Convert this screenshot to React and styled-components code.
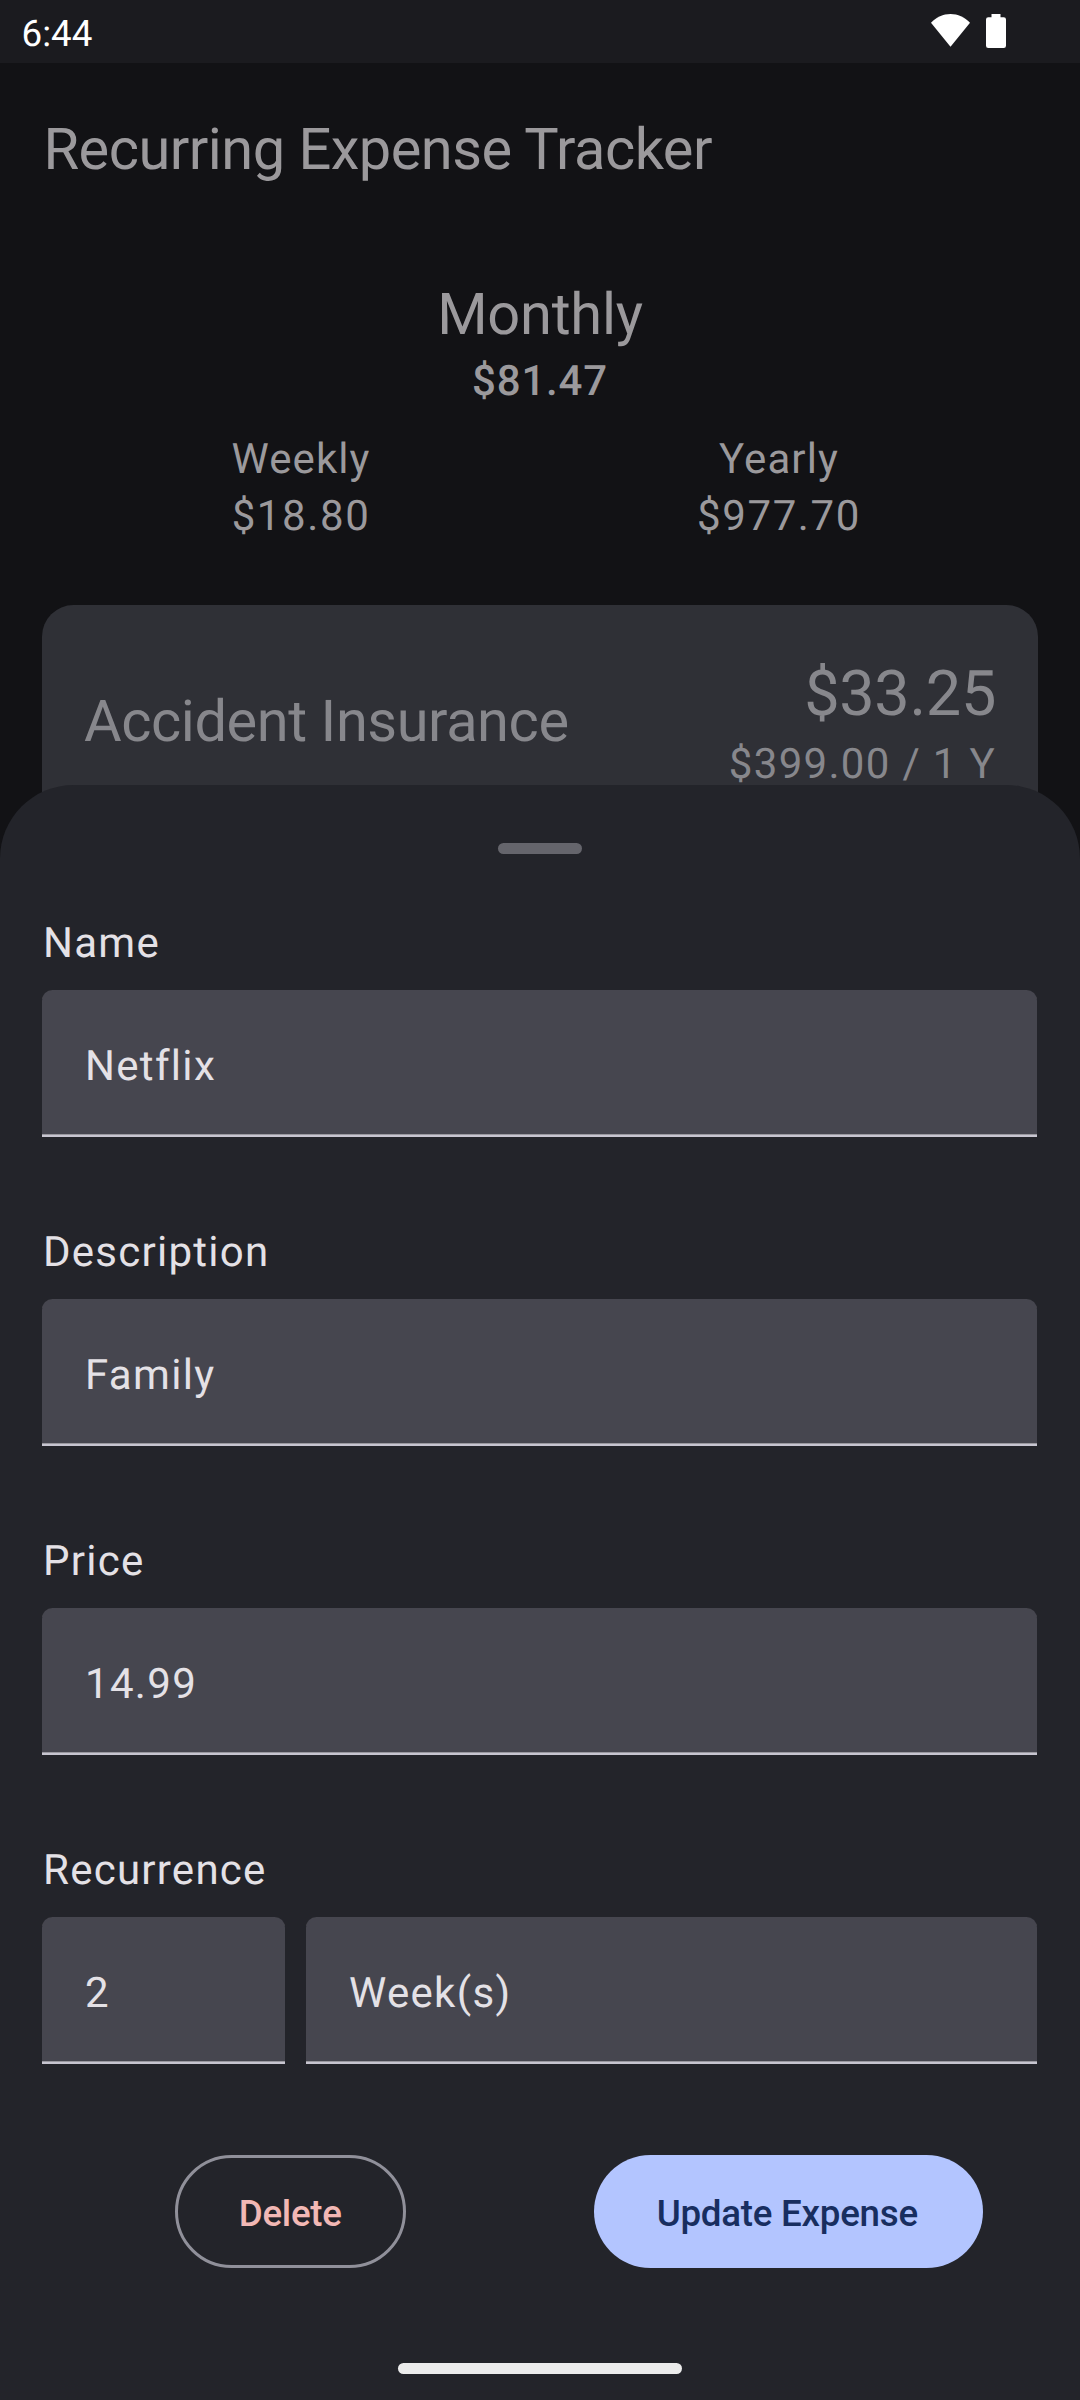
import React from "react";
import styled, { createGlobalStyle } from "styled-components";

const GlobalStyle = createGlobalStyle`
  *, *::before, *::after { box-sizing: border-box; }
  body {
    margin: 0;
    background: #121215;
    font-family: Roboto, "Noto Sans", sans-serif;
    text-rendering: geometricPrecision;
  }
`;

const Screen = styled.div`
  width: 1080px;
  height: 2400px;
  display: flex;
  flex-direction: column;
  overflow: hidden;
  background: #121215;
`;

const StatusBar = styled.header`
  flex: none;
  height: 63px;
  display: flex;
  align-items: flex-start;
  justify-content: space-between;
  padding: 0 74px 0 21.5px;
  background: #1b1b1f;
  color: #fff;
`;

const Clock = styled.span`
  font-size: 36.75px;
  line-height: 43px;
  padding-top: 12px;
`;

const StatusIcons = styled.div`
  display: flex;
  gap: 16px;
  padding-top: 14px;
`;

const Backdrop = styled.div`
  flex: none;
  height: 722px;
  display: flex;
  flex-direction: column;
  color: #9b999c;
`;

const AppTitle = styled.h1`
  margin: 0;
  padding: 51px 0 0 43.5px;
  font-size: 57.75px;
  font-weight: 400;
  line-height: 73px;
  letter-spacing: -0.52px;
`;

const Summary = styled.section`
  display: flex;
  flex-direction: column;
  align-items: center;
  padding-top: 92px;
`;

const SummaryTitle = styled.h2`
  margin: 0 0 1px;
  font-size: 57.75px;
  font-weight: 400;
  line-height: 73px;
  letter-spacing: -0.25px;
`;

const Amount = styled.div`
  font-size: 42px;
  font-weight: ${(p) => (p.$strong ? 500 : 400)};
  line-height: 57px;
  letter-spacing: ${(p) => p.$tracking || "1.3125px"};
`;

const SummaryRow = styled.div`
  width: 100%;
  display: grid;
  grid-template-columns: 1fr 1fr;
  margin-top: 21px;
  padding: 0 62px;
  text-align: center;
`;

const ExpenseCard = styled.article`
  flex: none;
  display: flex;
  justify-content: space-between;
  align-items: center;
  height: 235px;
  margin: 60px 42px 0;
  padding: 0 42px;
  border-radius: 31.5px;
  background: #2f3036;
  color: #87878c;
`;

const ExpenseName = styled.div`
  font-size: 57.75px;
  line-height: 73px;
  letter-spacing: -0.43px;
`;

const ExpensePrices = styled.div`
  display: flex;
  flex-direction: column;
  align-items: flex-end;
`;

const MonthlyPrice = styled.div`
  font-size: 63px;
  line-height: 83px;
  letter-spacing: -0.3px;
`;

const Sheet = styled.main`
  flex: 1;
  display: flex;
  flex-direction: column;
  padding: 0 42px;
  border-radius: 73.5px 73.5px 0 0;
  background: #23242a;
  color: #e4e1e6;
  z-index: 1;
`;

const DragHandle = styled.div`
  flex: none;
  align-self: center;
  width: 84px;
  height: 11px;
  margin-top: 58px;
  border-radius: 6px;
  background: #65656c;
`;

const Form = styled.form`
  display: flex;
  flex-direction: column;
  gap: 83px;
  padding: 57px 1px 0 0;
`;

const Field = styled.div`
  display: flex;
  flex-direction: column;
  gap: 16px;
`;

const Label = styled.label`
  height: 63px;
  padding-left: 1px;
  font-size: 42px;
  line-height: 65px;
  letter-spacing: 1.25px;
`;

const InputRow = styled.div`
  display: grid;
  grid-template-columns: ${(p) => p.$columns || "1fr"};
  gap: 21px;
`;

const TextInput = styled.div`
  height: 147px;
  padding: 0 43px;
  border-bottom: 2px solid #c7c5d0;
  box-shadow: inset 0 -1px 0 #99989f;
  border-radius: 10.5px 10.5px 0 0;
  background: #46464f;
  font-size: 42px;
  line-height: 153px;
  letter-spacing: 1.3125px;
`;

const Actions = styled.div`
  display: grid;
  grid-template-columns: 1fr 1fr;
  justify-items: center;
  margin-top: 91px;
  padding-right: 1px;
`;

const Button = styled.button`
  height: 113px;
  width: ${(p) => (p.$filled ? "389px" : "231px")};
  padding: ${(p) => (p.$filled ? "4px 2px 0 0" : "4px 1px 0 0")};
  border: ${(p) => (p.$filled ? "none" : "3px solid #90909a")};
  border-radius: 57px;
  background: ${(p) => (p.$filled ? "#b3c5ff" : "transparent")};
  color: ${(p) => (p.$filled ? "#182e60" : "#f2b8b5")};
  font-family: inherit;
  font-size: 36.75px;
  font-weight: 500;
  letter-spacing: -0.27px;
`;

const NavPill = styled.div`
  align-self: center;
  width: 284px;
  height: 11px;
  margin-top: 95px;
  border-radius: 5.5px;
  background: #ececec;
`;

const WifiIcon = () => (
  <svg width="39" height="33" viewBox="0 0 39 33" fill="#fff">
    <path d="M0 8.8C5.4 3.3 12.2 0 19.5 0S33.600 3.3 39 8.8L19.5 32.8Z" />
  </svg>
);

const BatteryIcon = () => (
  <svg width="20" height="34" viewBox="0 0 20 34" fill="#fff">
    <path d="M5.5 0H14.5V3.3H17.7Q20 3.3 20 5.6V31.7Q20 34 17.7 34H2.3Q0 34 0 31.7V5.6Q0 3.3 2.3 3.3H5.5Z" />
  </svg>
);

const periods = [
  { label: "Weekly", amount: "$18.80" },
  { label: "Yearly", amount: "$977.70" },
];

const fields = [
  { label: "Name", values: ["Netflix"] },
  { label: "Description", values: ["Family"] },
  { label: "Price", values: ["14.99"] },
  { label: "Recurrence", values: ["2", "Week(s)"], columns: "243px 1fr" },
];

export default function App() {
  return (
    <Screen>
      <GlobalStyle />
      <StatusBar>
        <Clock>6:44</Clock>
        <StatusIcons>
          <WifiIcon />
          <BatteryIcon />
        </StatusIcons>
      </StatusBar>
      <Backdrop>
        <AppTitle>Recurring Expense Tracker</AppTitle>
        <Summary>
          <SummaryTitle>Monthly</SummaryTitle>
          <Amount $strong $tracking="0.8px">
            $81.47
          </Amount>
          <SummaryRow>
            {periods.map((p) => (
              <div key={p.label}>
                <Amount $tracking="1.1px">{p.label}</Amount>
                <Amount $tracking="1.6px">{p.amount}</Amount>
              </div>
            ))}
          </SummaryRow>
        </Summary>
        <ExpenseCard>
          <ExpenseName>Accident Insurance</ExpenseName>
          <ExpensePrices>
            <MonthlyPrice>$33.25</MonthlyPrice>
            <Amount>$399.00 / 1 Y</Amount>
          </ExpensePrices>
        </ExpenseCard>
      </Backdrop>
      <Sheet>
        <DragHandle />
        <Form>
          {fields.map((f) => (
            <Field key={f.label}>
              <Label>{f.label}</Label>
              <InputRow $columns={f.columns}>
                {f.values.map((v) => (
                  <TextInput key={v}>{v}</TextInput>
                ))}
              </InputRow>
            </Field>
          ))}
        </Form>
        <Actions>
          <Button type="button">Delete</Button>
          <Button type="button" $filled>
            Update Expense
          </Button>
        </Actions>
        <NavPill />
      </Sheet>
    </Screen>
  );
}
